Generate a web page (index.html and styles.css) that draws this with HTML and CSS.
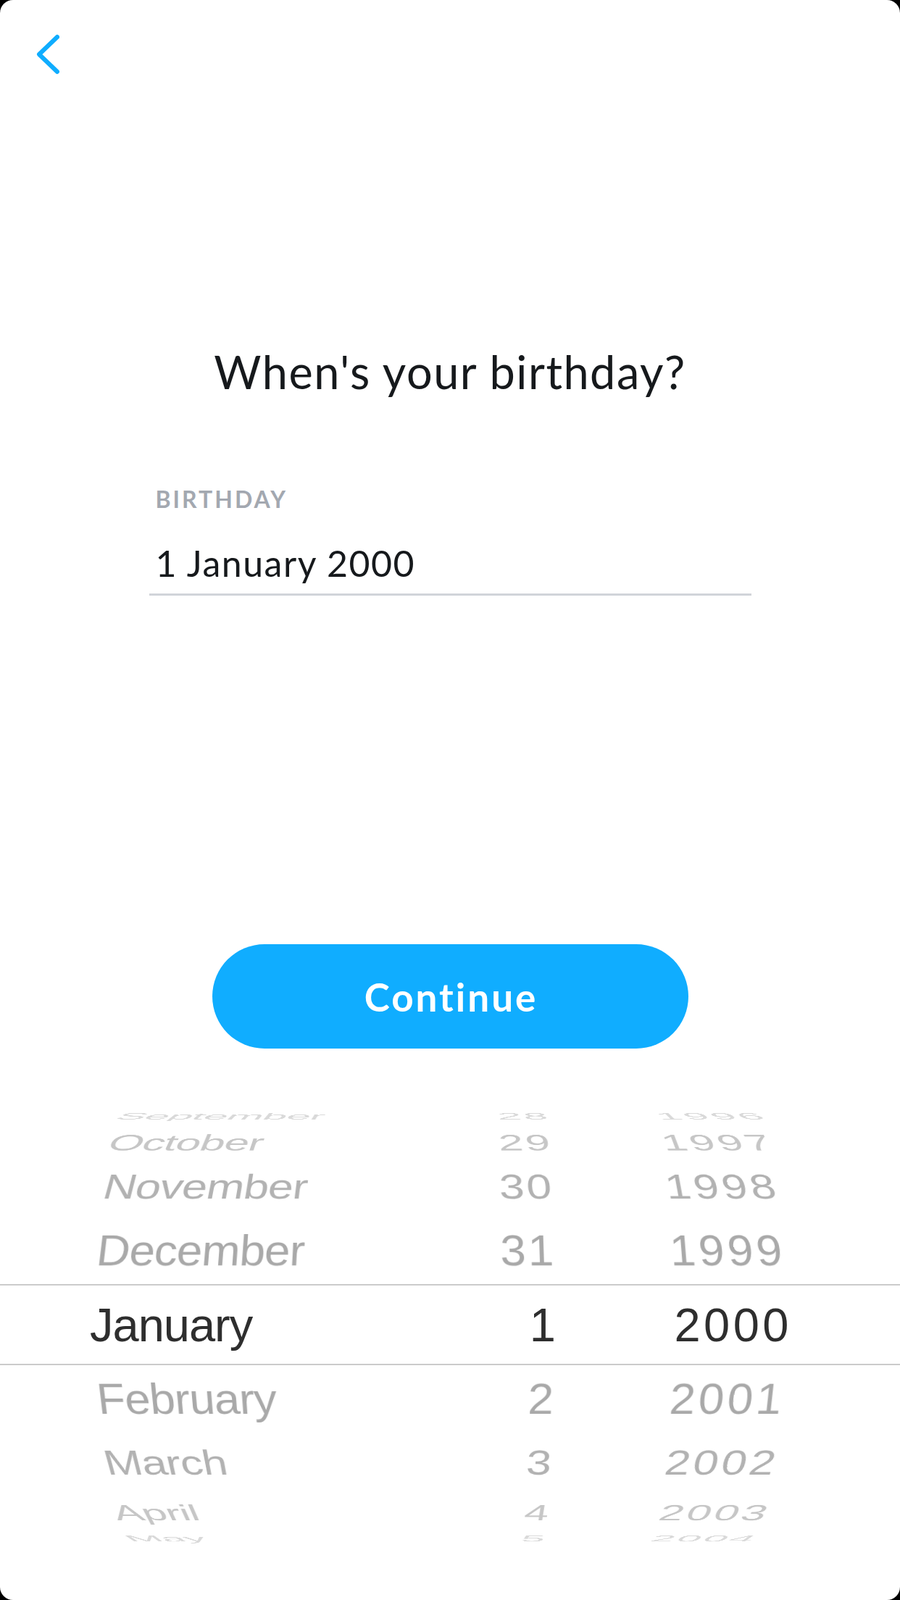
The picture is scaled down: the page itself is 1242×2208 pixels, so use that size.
FILE: index.html
```html
<!DOCTYPE html>
<html lang="en">
<head>
<meta charset="utf-8">
<title>When's your birthday?</title>
<link rel="stylesheet" href="styles.css">
</head>
<body>
<div class="screen">
  <header class="nav">
    <button class="back" aria-label="Back">
      <svg width="32" height="56" viewBox="0 0 32 56"><path d="M29 4 L4 28 L29 52" fill="none" stroke="#0fadff" stroke-width="6" stroke-linecap="round" stroke-linejoin="round"/></svg>
    </button>
  </header>
  <main class="content">
    <h1 class="title">When's your birthday?</h1>
    <div class="field">
      <div class="field-label">BIRTHDAY</div>
      <div class="field-value">1 January 2000</div>
    </div>
    <button class="continue">Continue</button>
  </main>
  <div class="picker">
    <div class="row up4"><span class="m">September</span><span class="d">28</span><span class="y">1996</span></div>
    <div class="row up3"><span class="m">October</span><span class="d">29</span><span class="y">1997</span></div>
    <div class="row up2"><span class="m">November</span><span class="d">30</span><span class="y">1998</span></div>
    <div class="row up1"><span class="m">December</span><span class="d">31</span><span class="y">1999</span></div>
    <div class="row sel"><span class="m">January</span><span class="d">1</span><span class="y">2000</span></div>
    <div class="row dn1"><span class="m">February</span><span class="d">2</span><span class="y">2001</span></div>
    <div class="row dn2"><span class="m">March</span><span class="d">3</span><span class="y">2002</span></div>
    <div class="row dn3"><span class="m">April</span><span class="d">4</span><span class="y">2003</span></div>
    <div class="row dn4"><span class="m">May</span><span class="d">5</span><span class="y">2004</span></div>
  </div>
</div>
</body>
</html>
```
FILE: styles.css
```css
html, body {
  margin: 0;
  padding: 0;
  background: #000;
}
.screen {
  width: 1242px;
  height: 2208px;
  background: #fff;
  border-radius: 18px;
  overflow: hidden;
  font-family: Lato, "Noto Sans", sans-serif;
}
.nav {
  padding: 47px 0 0 50px;
  height: 56px;
}
.back {
  display: block;
  padding: 0;
  margin: 0;
  border: 0;
  background: none;
  width: 32px;
  height: 56px;
}
.back svg { display: block; }

.content {
  display: flex;
  flex-direction: column;
  align-items: center;
}
.title {
  margin: 372px 0 0;
  font-size: 63px;
  line-height: 76px;
  font-weight: 400;
  letter-spacing: 1.5px;
  color: #16191c;
  text-align: center;
}
.field {
  margin-top: 118px;
  width: 831px;
  border-bottom: 3px solid #d1d4d9;
  padding: 0 0 12px 9px;
  box-sizing: border-box;
}
.field-label {
  font-size: 32px;
  line-height: 40px;
  font-weight: 700;
  letter-spacing: 3px;
  color: #a3a8b0;
}
.field-value {
  margin-top: 38px;
  font-size: 50px;
  line-height: 60px;
  letter-spacing: 1.5px;
  color: #16191c;
}
.continue {
  margin-top: 481px;
  width: 657px;
  height: 144px;
  border: 0;
  border-radius: 72px;
  background: #10adff;
  color: #fff;
  font-family: Lato, "Noto Sans", sans-serif;
  font-size: 53px;
  font-weight: 700;
  letter-spacing: 3px;
  padding: 0 0 0 3px;
}

.picker {
  margin-top: 77px;
  font-family: "Liberation Sans", Arial, sans-serif;
  font-size: 65px;
}
.row {
  display: grid;
  grid-template-columns: 436px 210px 323px;
  padding-left: 124px;
  align-items: center;
  line-height: 1;
  transform-origin: 621px 50%;
  white-space: nowrap;
}
.m { letter-spacing: -1px; }
.d { text-align: right; letter-spacing: 3px; }
.y { text-align: right; letter-spacing: 4.5px; }

.sel {
  height: 108px;
  border-top: 2px solid #cbcbcb;
  border-bottom: 2px solid #cbcbcb;
  color: #2e2e2e;
}
.up1, .dn1 { height: 93px; color: #a9a9a9; }
.up2, .dn2 { height: 83px; color: #b2b2b2; }
.up3, .dn3 { height: 47px; color: #c6c6c6; }
.up4, .dn4 { height: 25px; color: #d9d9d9; }

.up1 { transform: scale(0.98) perspective(1500px) rotateX(20deg); }
.up2 { transform: scale(0.96) perspective(1500px) rotateX(40deg); }
.up3 { transform: scale(0.94) perspective(1500px) rotateX(60deg); }
.up4 { transform: scale(0.91) perspective(1500px) rotateX(78deg); }
.dn1 { transform: scale(0.98) perspective(1500px) rotateX(-20deg); }
.dn2 { transform: scale(0.96) perspective(1500px) rotateX(-40deg); }
.dn3 { transform: scale(0.94) perspective(1500px) rotateX(-60deg); }
.dn4 { transform: scale(0.91) perspective(1500px) rotateX(-78deg); }
```
